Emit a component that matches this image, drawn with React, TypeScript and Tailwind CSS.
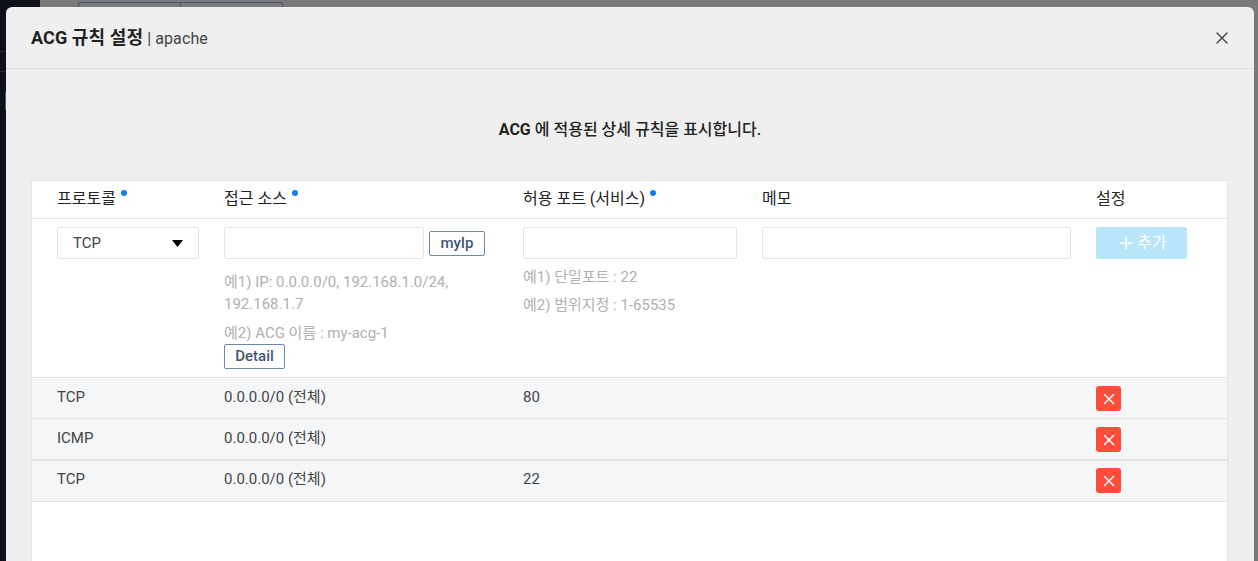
import React from 'react';
import { X, Plus } from 'lucide-react';

const gridCols = 'grid grid-cols-[167px_299px_239px_334px_1fr] pl-[25px]';

const rules = [
  { proto: 'TCP', source: '0.0.0.0/0 (전체)', port: '80', row: 'h-[41px] border-b pt-[8px]' },
  { proto: 'ICMP', source: '0.0.0.0/0 (전체)', port: '', row: 'h-[41px] border-b pt-[8px]' },
  { proto: 'TCP', source: '0.0.0.0/0 (전체)', port: '22', row: 'h-[42px] border-y pt-[7px]' },
];

const HeaderCell: React.FC<{ label: string; dot?: boolean }> = ({ label, dot }) => (
  <div className="flex items-center pb-[2px]">
    <span className="relative leading-[20px]">
      {label}
      {dot && <span className="absolute -right-[11px] top-[1px] w-[6px] h-[6px] rounded-full bg-[#0f7fe6]" />}
    </span>
  </div>
);

const App: React.FC = () => {
  return (
    <div
      className="relative h-[561px] overflow-hidden bg-[#7a7a7a] text-[15px] text-[#222]"
      style={{ fontFamily: 'Roboto, "Noto Sans CJK KR", sans-serif' }}
    >
      {/* page behind the dim layer */}
      <div className="absolute left-0 top-0 bottom-0 w-[40px] bg-[#0d1117]">
        <div className="absolute left-0 right-0 top-[51px] h-px bg-[#2a2d31]" />
        <div className="absolute left-0 right-0 top-[71px] h-px bg-[#2a2d31]" />
        <div className="absolute left-[5px] top-[92px] w-px h-[18px] bg-[#3b5f8a]" />
      </div>
      <div className="absolute left-[78px] top-[2px] w-[205px] h-[12px] flex border border-[#45566f] rounded-[2px]">
        <div className="w-[102px] border-r border-[#45566f]" />
      </div>

      <div className="relative ml-[6px] mr-[4px] mt-[7px] h-[554px] bg-[#efefef] rounded-t-[6px] overflow-hidden">
        <div className="flex items-center justify-between h-[62px] pl-[25px] pr-[22px] border-b border-[#dedede]">
          <div className="leading-[20px] pt-[1px]">
            <span className="text-[18px] font-bold text-[#222] tracking-[0.1px]">ACG 규칙 설정</span>
            <span className="text-[16px] text-[#444] tracking-[0.1px]"> | apache</span>
          </div>
          <X className="w-[20px] h-[20px] text-[#444]" strokeWidth={1.6} />
        </div>

        <p className="mt-[51px] text-center text-[16px] leading-[20px] font-medium text-[#222]">
          <span className="font-bold">ACG</span> 에 적용된 상세 규칙을 표시합니다.
        </p>

        <div className="mt-[40px] ml-[25px] w-[1197px] h-[400px] bg-white border border-[#e2e3e5] border-b-0">
          <div className={`${gridCols} h-[38px] border-b border-[#e2e3e5] text-[16px]`}>
            <HeaderCell label="프로토콜" dot />
            <HeaderCell label="접근 소스" dot />
            <HeaderCell label="허용 포트 (서비스)" dot />
            <HeaderCell label="메모" />
            <HeaderCell label="설정" />
          </div>

          <div className={`${gridCols} h-[159px] pt-[8px] border-b border-[#e2e3e5]`}>
            <div>
              <div className="flex items-center justify-between w-[142px] h-[32px] pl-[15px] pr-[15px] bg-white border border-[#e2e3e5] rounded-[2px] text-[#444]">
                <span>TCP</span>
                <svg width="11" height="7" viewBox="0 0 11 7"><path d="M0 0h11L5.5 7z" fill="#000" /></svg>
              </div>
            </div>
            <div>
              <div className="flex items-center gap-[5px]">
                <input className="w-[200px] h-[32px] bg-white border border-[#e2e3e5] rounded-[2px]" readOnly />
                <button className="w-[56px] h-[25px] bg-white border border-[#6f87a8] rounded-[2px] font-medium text-[#3f5878]">myIp</button>
              </div>
              <p className="mt-[12px] w-[260px] leading-[22px] text-[#b0b0b0]">예1) IP: 0.0.0.0/0, 192.168.1.0/24, 192.168.1.7</p>
              <p className="mt-[7px] leading-[22px] text-[#b0b0b0]">예2) ACG 이름 : my-acg-1</p>
              <button className="block w-[61px] h-[25px] mt-0 bg-white border border-[#6f87a8] rounded-[2px] font-medium text-[#3f5878]">Detail</button>
            </div>
            <div>
              <input className="w-[214px] h-[32px] bg-white border border-[#e2e3e5] rounded-[2px]" readOnly />
              <p className="mt-[7px] leading-[22px] text-[#b0b0b0]">예1) 단일포트 : 22</p>
              <p className="mt-[6px] leading-[22px] text-[#b0b0b0]">예2) 범위지정 : 1-65535</p>
            </div>
            <div>
              <input className="w-[309px] h-[32px] bg-white border border-[#e2e3e5] rounded-[2px]" readOnly />
            </div>
            <div>
              <button className="flex items-center justify-center gap-[1px] w-[91px] h-[32px] bg-[#b9e5fb] rounded-[2px] text-white text-[16px]">
                <Plus className="w-[20px] h-[20px]" strokeWidth={2} />
                추가
              </button>
            </div>
          </div>

          {rules.map((rule, i) => (
            <div key={i} className={`${gridCols} ${rule.row} bg-[#f5f6f8] text-[#444] border-[#e2e3e5]`}>
              <div className="leading-[22px]">{rule.proto}</div>
              <div className="leading-[22px]">{rule.source}</div>
              <div className="leading-[22px]">{rule.port}</div>
              <div />
              <div>
                <button className="flex items-center justify-center w-[25px] h-[25px] bg-[#ff4d3a] rounded-[3px]">
                  <X className="w-[18px] h-[18px] text-white" strokeWidth={2} />
                </button>
              </div>
            </div>
          ))}
        </div>
      </div>
    </div>
  );
};

export default App;
